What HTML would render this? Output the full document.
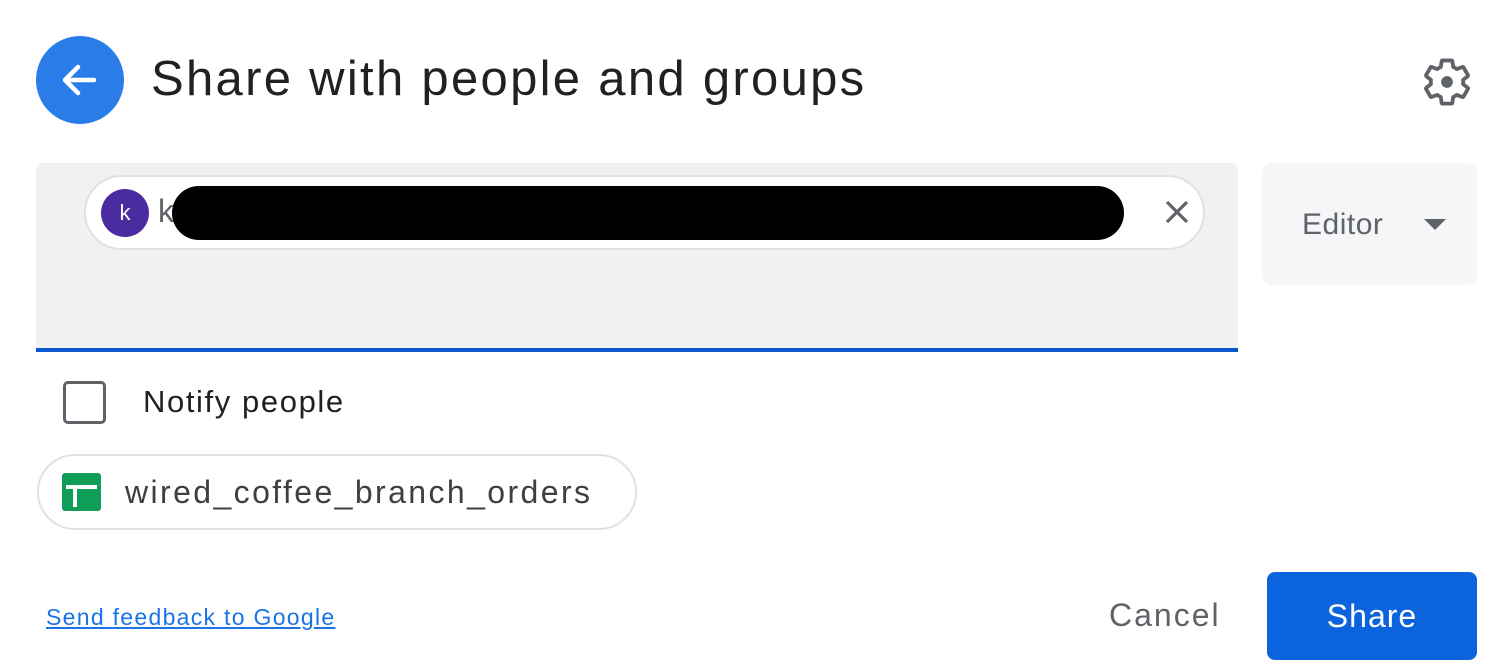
<!DOCTYPE html>
<html><head><style>
*{margin:0;padding:0;box-sizing:border-box}
body{width:1506px;height:672px;background:#fff;position:relative;overflow:hidden;font-family:"Liberation Sans",Arial,sans-serif}
.a{position:absolute;white-space:nowrap}
</style></head><body>
<div class="a" style="left:36px;top:36px;width:88px;height:88px;border-radius:50%;background:#2a7de9"></div>
<svg class="a" style="left:56px;top:56px" width="48" height="48" viewBox="0 0 48 48"><path d="M38 24H10M22 11L9 24l13 13" fill="none" stroke="#fff" stroke-width="4.5" stroke-linecap="round" stroke-linejoin="round"/></svg>
<div class="a" style="left:151px;top:47px;font-size:49px;letter-spacing:2.3px;color:#202124;line-height:64px">Share with people and groups</div>
<svg class="a" style="left:1420px;top:55px" width="54" height="54" viewBox="0 0 24 24"><path fill="none" stroke="#5f6368" stroke-width="1.7" stroke-linejoin="round" d="M19.14 12.94c.04-.3.06-.61.06-.94 0-.32-.02-.64-.07-.94l2.03-1.58a.49.49 0 00.12-.61l-1.92-3.32a.488.488 0 00-.59-.22l-2.39.96c-.5-.38-1.03-.7-1.62-.94l-.36-2.54a.484.484 0 00-.48-.41h-3.84c-.24 0-.43.17-.47.41l-.36 2.54c-.59.24-1.13.57-1.62.94l-2.39-.96c-.22-.08-.47 0-.59.22L2.74 8.87c-.12.21-.08.47.12.61l2.03 1.58c-.05.3-.09.63-.09.94s.02.64.07.94l-2.03 1.58a.49.49 0 00-.12.61l1.92 3.32c.12.22.37.29.59.22l2.39-.96c.5.38 1.03.7 1.62.94l.36 2.54c.05.24.24.41.48.41h3.84c.24 0 .44-.17.47-.41l.36-2.54c.59-.24 1.13-.56 1.62-.94l2.39.96c.22.08.47 0 .59-.22l1.92-3.32c.12-.22.07-.47-.12-.61l-2.01-1.58z"/><circle cx="12" cy="12" r="2.6" fill="#5f6368"/></svg>
<div class="a" style="left:36px;top:163px;width:1202px;height:189px;background:#eff1f2;border-radius:8px 8px 0 0;border-bottom:4px solid #0b57d0"></div>
<div class="a" style="left:84px;top:175px;width:1121px;height:75px;background:#fff;border:2px solid #dfe1e5;border-radius:38px"></div>
<div class="a" style="left:101px;top:189px;width:48px;height:48px;border-radius:50%;background:#4a2ba0;color:#fff;font-size:22px;text-align:center;line-height:48px">k</div>
<div class="a" style="left:158px;top:193px;font-size:32px;color:#5f6368">k</div>
<div class="a" style="left:172px;top:186px;width:952px;height:54px;background:#000;border-radius:27px"></div>
<svg class="a" style="left:1165px;top:200px" width="24" height="24" viewBox="0 0 24 24"><path d="M2 2L22 22M22 2L2 22" stroke="#5f6368" stroke-width="3.2"/></svg>
<div class="a" style="left:1262px;top:163px;width:215px;height:122px;background:#f5f6f7;border-radius:10px"></div>
<div class="a" style="left:1302px;top:208px;font-size:30px;letter-spacing:0.5px;color:#5f6368">Editor</div>
<svg class="a" style="left:1424px;top:219px" width="22" height="12"><path d="M0 0h22L11 11z" fill="#5f6368"/></svg>
<div class="a" style="left:63px;top:381px;width:43px;height:43px;border:3.5px solid #5f6368;border-radius:5px"></div>
<div class="a" style="left:143px;top:384px;font-size:31px;letter-spacing:1.6px;color:#202124">Notify people</div>
<div class="a" style="left:37px;top:454px;width:600px;height:76px;border:2px solid #dfe1e5;border-radius:38px"></div>
<div class="a" style="left:62px;top:473px;width:39px;height:38px;background:#0f9d58;border-radius:3px"></div>
<div class="a" style="left:66px;top:485px;width:31px;height:4px;background:#fff"></div>
<div class="a" style="left:73px;top:485px;width:4px;height:22px;background:#fff"></div>
<div class="a" style="left:125px;top:474px;font-size:32px;letter-spacing:2.4px;color:#3c4043">wired_coffee_branch_orders</div>
<div class="a" style="left:46px;top:604px;font-size:23px;letter-spacing:1.3px;color:#1a73e8;text-decoration:underline">Send feedback to Google</div>
<div class="a" style="left:1109px;top:597px;font-size:32px;letter-spacing:2px;color:#5f6368">Cancel</div>
<div class="a" style="left:1267px;top:572px;width:210px;height:88px;background:#0b63de;border-radius:8px;color:#fff;font-size:32px;letter-spacing:1px;text-align:center;line-height:88px">Share</div>
</body></html>
